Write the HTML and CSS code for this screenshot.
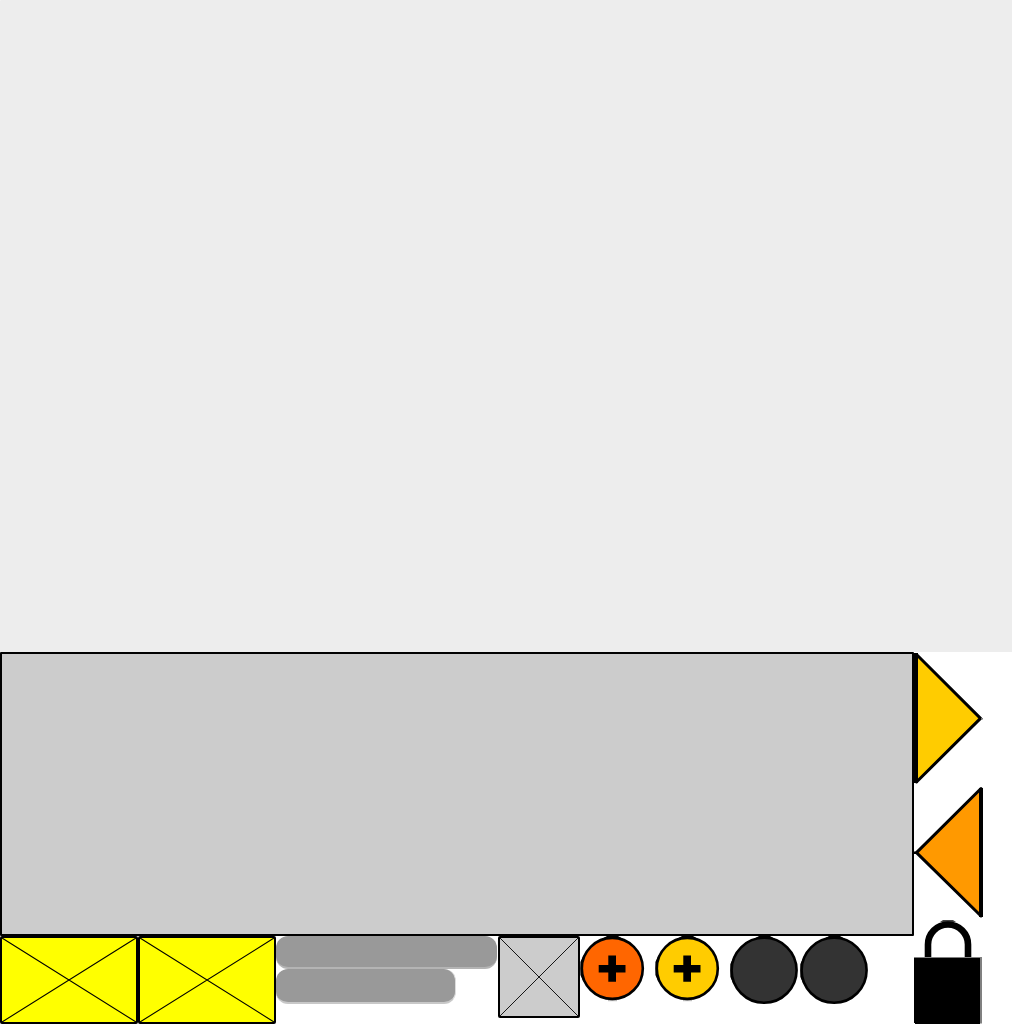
FILE: index.html
```
<!DOCTYPE html>
<html lang="en">
<head>
<meta charset="utf-8">
<title>Sprite sheet</title>
<link rel="stylesheet" href="styles.css">
</head>
<body>
<main class="sheet">
  <div class="backdrop"></div>
  <div class="lower">
    <div class="left">
      <div class="panel"></div>
      <div class="sprites">
        <svg class="tile" width="138" height="88" viewBox="0 0 138 88"><rect x="1" y="1" width="136" height="86" rx="1" fill="#ff0" stroke="#000" stroke-width="2"/><path d="M2 2 136 86M2 86 136 2" stroke="#000" stroke-width="1.1"/></svg>
        <svg class="tile" width="138" height="88" viewBox="0 0 138 88"><rect x="1" y="1" width="136" height="86" rx="1" fill="#ff0" stroke="#000" stroke-width="2"/><path d="M2 2 136 86M2 86 136 2" stroke="#000" stroke-width="1.1"/></svg>
        <div class="bars">
          <div class="bar bar-long"></div>
          <div class="bar bar-short"></div>
        </div>
        <svg class="slot" width="82" height="82" viewBox="0 0 82 82"><rect x="1" y="1" width="80" height="80" rx="1" fill="#ccc" stroke="#000" stroke-width="2"/><path d="M2 2 80 80M2 80 80 2" stroke="#000" stroke-width=".9"/></svg>
        <svg class="add" width="75" height="66" viewBox="0 0 75 66"><path d="M27 0h11l6 3.5H21zM.4 26 3.5 19v27L.4 39z"/><path d="M28 64h9v1.2h-9z" fill="#bbb"/><circle cx="32.3" cy="32.4" r="30.5" fill="#f60" stroke="#000" stroke-width="2.6"/><path d="M28.3 19.5h7.7V29h9.5v7.5H36v9.3h-7.7v-9.3h-9.6V29h9.6z"/></svg>
        <svg class="add" width="75" height="66" viewBox="0 0 75 66"><path d="M27 0h11l6 3.5H21zM.4 26 3.5 19v27L.4 39z"/><path d="M28 64h9v1.2h-9z" fill="#bbb"/><circle cx="32.3" cy="32.4" r="30.5" fill="#fc0" stroke="#000" stroke-width="2.6"/><path d="M28.3 19.5h7.7V29h9.5v7.5H36v9.3h-7.7v-9.3h-9.6V29h9.6z"/></svg>
        <svg class="dot" width="70" height="70" viewBox="0 0 70 70"><path d="M29 0h11l6 3.5H23zM.4 28 3.5 21v27L.4 41z"/><circle cx="34.1" cy="34.3" r="32.5" fill="#333" stroke="#000" stroke-width="2.6"/></svg>
        <svg class="dot" width="70" height="70" viewBox="0 0 70 70"><path d="M29 0h11l6 3.5H23zM.4 28 3.5 21v27L.4 41z"/><circle cx="34.1" cy="34.3" r="32.5" fill="#333" stroke="#000" stroke-width="2.6"/></svg>
      </div>
    </div>
    <div class="side">
      <svg width="70" height="134" viewBox="0 0 70 134"><path d="M2.5 2.5 66.5 66.4 2.5 130z" fill="#fc0" stroke="#000" stroke-width="3" stroke-linejoin="round"/><path d="M2 1v130" stroke="#000" stroke-width="4"/><path d="M67 66h2v1.5h-2z" fill="#777"/></svg>
      <svg width="70" height="134" viewBox="0 0 70 134"><path d="M67 2.5 2.5 66.6 67 130z" fill="#f90" stroke="#000" stroke-width="3" stroke-linejoin="round"/><path d="M67 2v129" stroke="#000" stroke-width="4"/><path d="M0 65.5h3v2.5H0z"/></svg>
      <svg width="70" height="104" viewBox="0 0 70 104"><path d="M29 0h10l3 2H26z" fill="#444"/><path d="M14 39V24.5a20 20 0 0 1 40 0V39" fill="none" stroke="#000" stroke-width="6.6"/><path d="M0 37h68v66.5H1V103H0z" fill="#808080"/><path d="M0 38h66v66H1v-1H0z"/></svg>
    </div>
  </div>
</main>
</body>
</html>
```
FILE: styles.css
```
body {
  margin: 0;
  background: #fff;
}

.sheet {
  width: 1024px;
  height: 1024px;
  overflow: hidden;
}

svg {
  display: block;
  flex: none;
}

.backdrop {
  width: 1012px;
  height: 652px;
  background: #ededed;
  border-top-left-radius: 1px;
}

.lower {
  display: flex;
}

.left {
  width: 914px;
}

.panel {
  box-sizing: border-box;
  height: 284px;
  border: 2px solid #000;
  border-radius: 1px;
  background: #ccc;
}

.sprites {
  display: flex;
  align-items: flex-start;
  height: 88px;
}

.bars {
  width: 222px;
}

.bar {
  box-sizing: border-box;
  background: #999;
  border-radius: 12px;
}

.bar-long {
  width: 221px;
  height: 33px;
  border-bottom: 2px solid #b4b4b4;
}

.bar-short {
  width: 180px;
  height: 35px;
  border-right: 1px solid #ddd;
  border-bottom: 2px solid #c8c8c8;
}

.side {
  width: 70px;
  height: 372px;
}
```
